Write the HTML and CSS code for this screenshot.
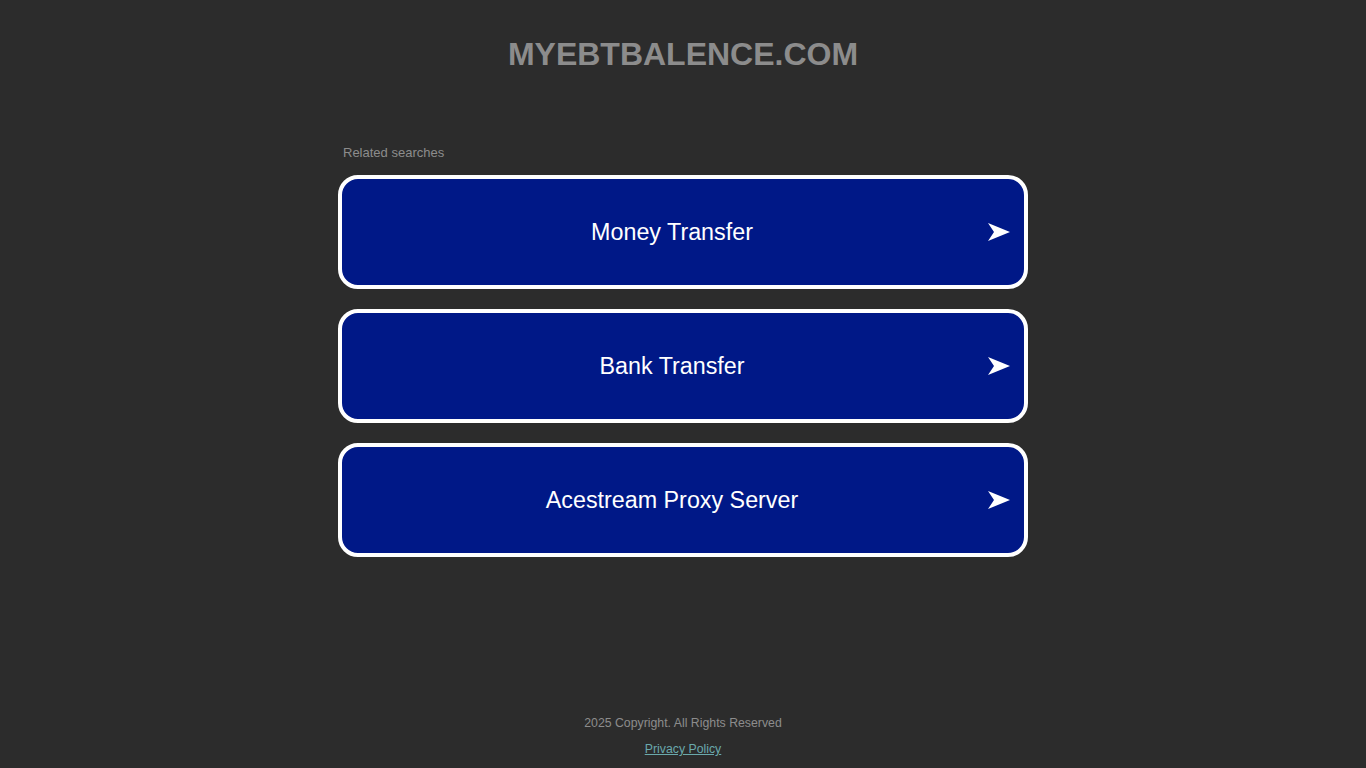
FILE: index.html
```html
<!DOCTYPE html>
<html lang="en">
<head>
<meta charset="utf-8">
<title>myebtbalence.com</title>
<link rel="stylesheet" href="styles.css">
</head>
<body>
<div class="page">
  <header class="header">
    <h1 class="domain">MYEBTBALENCE.COM</h1>
  </header>
  <main class="searches">
    <div class="label">Related searches</div>
    <div class="list">
      <a class="item" href="#"><span class="item-text">Money Transfer</span><svg class="arrow" viewBox="0 0 22 18" width="22" height="18"><path d="M0 0 L22 9 L0 18 L6 9 Z" fill="#fff"/></svg></a>
      <a class="item" href="#"><span class="item-text">Bank Transfer</span><svg class="arrow" viewBox="0 0 22 18" width="22" height="18"><path d="M0 0 L22 9 L0 18 L6 9 Z" fill="#fff"/></svg></a>
      <a class="item" href="#"><span class="item-text">Acestream Proxy Server</span><svg class="arrow" viewBox="0 0 22 18" width="22" height="18"><path d="M0 0 L22 9 L0 18 L6 9 Z" fill="#fff"/></svg></a>
    </div>
  </main>
  <footer class="footer">
    <div class="copyright">2025 Copyright. All Rights Reserved</div>
    <a class="privacy" href="#">Privacy Policy</a>
  </footer>
</div>
</body>
</html>
```

FILE: styles.css
```css
html, body {
  margin: 0;
  padding: 0;
  background: #2c2c2c;
}
.page {
  min-height: 100vh;
  display: flex;
  flex-direction: column;
  font-family: "Liberation Sans", Arial, sans-serif;
}
.header {
  padding-top: 36px;
  text-align: center;
}
.domain {
  margin: 0;
  font-weight: bold;
  font-size: 32px;
  line-height: 37px;
  color: #8c8c8c;
}
.searches {
  width: 690px;
  margin: 72px auto 0;
}
.label {
  padding-left: 5px;
  font-size: 13px;
  line-height: 15px;
  color: #8c8c8c;
  margin-bottom: 15px;
}
.list {
  display: flex;
  flex-direction: column;
  gap: 20px;
}
.item {
  display: flex;
  align-items: center;
  height: 114px;
  box-sizing: border-box;
  border: 4px solid #fff;
  border-radius: 20px;
  background: #001887;
  padding: 0 14px;
  text-decoration: none;
  color: #fff;
}
.item-text {
  flex: 1;
  text-align: center;
  font-size: 23.3px;
  line-height: 28px;
  color: #fff;
}
.arrow {
  flex: none;
  display: block;
}
.footer {
  margin-top: auto;
  padding-bottom: 12px;
  text-align: center;
  font-size: 12.3px;
  line-height: 14px;
}
.copyright {
  color: #8c8c8c;
  margin-bottom: 12px;
}
.privacy {
  color: #6aa9ac;
  text-decoration: underline;
}
```
